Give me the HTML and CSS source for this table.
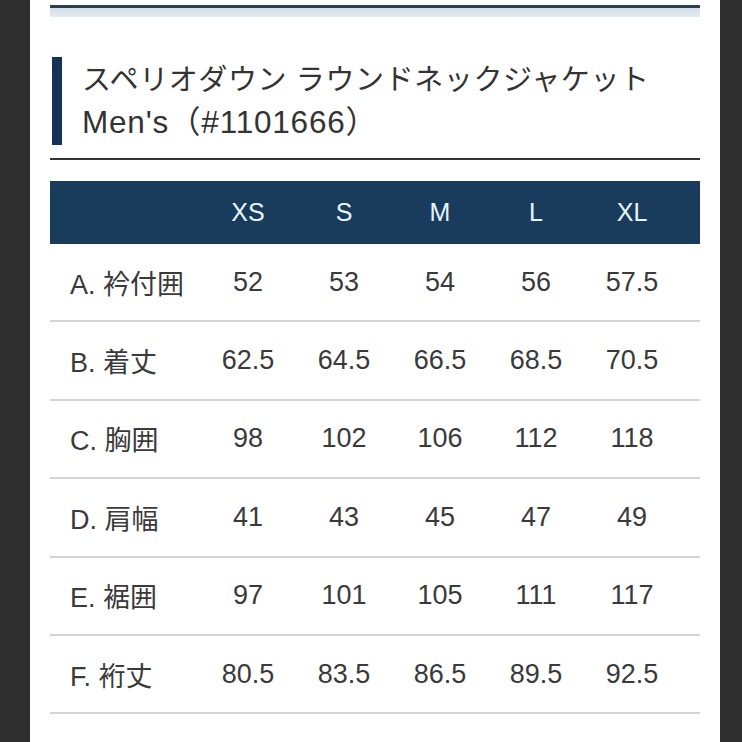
FILE: index.html
```html
<!DOCTYPE html>
<html lang="ja">
<head>
<meta charset="utf-8">
<title>サイズ表</title>
<link rel="stylesheet" href="styles.css">
</head>
<body>
<div class="page">
  <div class="topbar"></div>
  <div class="band"></div>
  <h1 class="title"><span class="kana">スペリオダウン ラウンドネックジャケット</span><br><span class="latin">Men's（#1101666）</span></h1>
  <div class="rule"></div>
  <div class="table">
    <div class="row head">
      <div class="cell label"></div>
      <div class="cell">XS</div>
      <div class="cell">S</div>
      <div class="cell">M</div>
      <div class="cell">L</div>
      <div class="cell">XL</div>
    </div>
    <div class="row">
      <div class="cell label">A. 衿付囲</div>
      <div class="cell">52</div><div class="cell">53</div><div class="cell">54</div><div class="cell">56</div><div class="cell">57.5</div>
    </div>
    <div class="row">
      <div class="cell label">B. 着丈</div>
      <div class="cell">62.5</div><div class="cell">64.5</div><div class="cell">66.5</div><div class="cell">68.5</div><div class="cell">70.5</div>
    </div>
    <div class="row">
      <div class="cell label">C. 胸囲</div>
      <div class="cell">98</div><div class="cell">102</div><div class="cell">106</div><div class="cell">112</div><div class="cell">118</div>
    </div>
    <div class="row">
      <div class="cell label">D. 肩幅</div>
      <div class="cell">41</div><div class="cell">43</div><div class="cell">45</div><div class="cell">47</div><div class="cell">49</div>
    </div>
    <div class="row">
      <div class="cell label">E. 裾囲</div>
      <div class="cell">97</div><div class="cell">101</div><div class="cell">105</div><div class="cell">111</div><div class="cell">117</div>
    </div>
    <div class="row">
      <div class="cell label">F. 裄丈</div>
      <div class="cell">80.5</div><div class="cell">83.5</div><div class="cell">86.5</div><div class="cell">89.5</div><div class="cell">92.5</div>
    </div>
  </div>
</div>
</body>
</html>
```
FILE: styles.css
```css
html, body {
  margin: 0;
  padding: 0;
  height: 742px;
  overflow: hidden;
  background: #2f2f2f;
}
body {
  font-family: "Liberation Sans", "Noto Sans CJK JP", sans-serif;
  color: #333;
}
.page {
  margin: 0 22px 0 30px;
  height: 742px;
  background: #fff;
  padding: 5px 20px 0 20px;
  box-sizing: border-box;
}
.topbar {
  height: 3px;
  background: #2a3e55;
}
.band {
  height: 9px;
  background: linear-gradient(#d3dee8, #e3eaf0);
}
.title {
  margin: 40px 0 0 2px;
  border-left: 10px solid #14325a;
  padding-left: 20px;
  font-weight: 400;
  font-size: 29px;
  line-height: 43.5px;
  letter-spacing: 0.6px;
  color: #333;
}
.title .kana {
  position: relative;
  top: 2px;
}
.title .latin {
  font-size: 31.5px;
  letter-spacing: 0.8px;
}
.rule {
  margin-top: 13px;
  height: 2px;
  background: #333;
}
.table {
  margin-top: 21px;
}
.row {
  display: grid;
  grid-template-columns: 150px repeat(5, 96px) 1fr;
  align-items: center;
  height: 78.4px;
  box-sizing: border-box;
  border-bottom: 2px solid #d4d4d4;
  font-size: 27px;
  color: #3a3a3a;
}
.row.head {
  height: 63px;
  border-bottom: 0;
  background: #1a3c5c;
  color: #e6f5fb;
  font-size: 25px;
}
.cell {
  text-align: center;
}
.cell.label {
  text-align: left;
  padding-left: 20px;
  white-space: nowrap;
}
```
